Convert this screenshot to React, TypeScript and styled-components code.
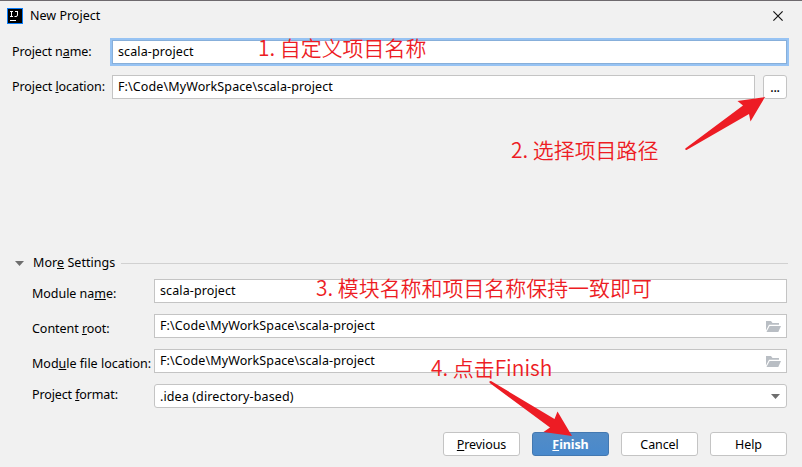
import React from "react";
import styled, { createGlobalStyle } from "styled-components";

const Global = createGlobalStyle`
  * { box-sizing: border-box; }
  body { margin: 0; background: #f1f1f1; }
`;

const Dialog = styled.div`
  position: relative;
  display: flex;
  flex-direction: column;
  width: 802px;
  height: 467px;
  overflow: hidden;
  background: #f1f1f1;
  border-top: 1px solid #6e6a6e;
  color: #000;
  font-family: "Noto Sans", "Open Sans", sans-serif;
  font-size: 12.5px;
  line-height: 18px;
  white-space: nowrap;
`;

const TitleBar = styled.header`
  display: flex;
  align-items: center;
  height: 29px;
  padding: 0 19px 0 7px;
`;

const Title = styled.h1`
  flex: 1;
  margin: 1px 0 0 7px;
  font-size: inherit;
  font-weight: 400;
`;

const ProjectForm = styled.section`
  display: grid;
  grid-template-columns: 100px 1fr;
  grid-auto-rows: 24px;
  row-gap: 11px;
  padding: 10px 15px 0 12px;
`;

const ModuleForm = styled(ProjectForm)`
  grid-template-columns: 122px 1fr;
  padding: 6px 15px 0 32px;
`;

const Label = styled.label<{ $drop?: number; $spacing?: number }>`
  align-self: start;
  margin-top: ${(p) => p.$drop ?? 3}px;
  letter-spacing: ${(p) => p.$spacing ?? 0}px;
`;

const Mnemonic = styled.span`
  text-decoration: underline;
  text-decoration-thickness: 1px;
  text-underline-offset: 1px;
  text-decoration-skip-ink: none;
`;

const Field = styled.div<{ $focused?: boolean; $rounded?: boolean; $lift?: number }>`
  display: flex;
  flex: 1;
  align-items: center;
  justify-content: space-between;
  height: 24px;
  padding: 0 5px;
  background: #fff;
  border: 1px solid ${(p) => (p.$focused ? "#87afda" : "#c4c4c4")};
  border-radius: ${(p) => (p.$rounded ? 3 : 0)}px;
  box-shadow: ${(p) => (p.$focused ? "0 0 0 2px #97c3f3" : "none")};
  letter-spacing: 0.11px;

  > span {
    margin-top: ${(p) => p.$lift ?? 0}px;
  }
`;

const FieldGroup = styled.div`
  display: flex;
  gap: 8px;
`;

const Button = styled.button<{ $primary?: boolean }>`
  width: 77px;
  height: 24px;
  padding: 1px 0 0;
  background: ${(p) => (p.$primary ? "linear-gradient(#528cc7, #4989cc)" : "#fff")};
  border: 1px solid ${(p) => (p.$primary ? "#4378b0" : "#c4c4c4")};
  border-radius: 3px;
  color: ${(p) => (p.$primary ? "#fff" : "#000")};
  font: inherit;
  font-weight: ${(p) => (p.$primary ? 700 : 400)};
  letter-spacing: -0.1px;
`;

const BrowseButton = styled(Button)`
  width: 24px;
  padding-top: 2px;
  font-weight: 500;
  letter-spacing: -0.3px;
`;

const SectionHeader = styled.div`
  display: flex;
  align-items: center;
  height: 20px;
  margin-top: 154px;
  padding: 0 14px 0 15px;
`;

const SectionTitle = styled.span`
  margin: 0 6px 0 9px;
  letter-spacing: 0.05px;
`;

const Rule = styled.div`
  flex: 1;
  height: 1px;
  background: #d1d1d1;
`;

const Footer = styled.footer`
  display: flex;
  justify-content: flex-end;
  gap: 12px;
  margin-top: 24px;
  padding-right: 15px;
`;

const Note = styled.div<{ $x: number; $y: number }>`
  position: absolute;
  left: ${(p) => p.$x}px;
  top: ${(p) => p.$y}px;
  color: #ed1c24;
  font: 350 20.95px/30px "Noto Sans CJK SC", sans-serif;
`;

const Arrows = styled.svg`
  position: absolute;
  left: 0;
  top: -1px;
  pointer-events: none;
`;

const AppIcon = () => (
  <svg width="16" height="16" viewBox="0 0 16 16">
    <rect width="16" height="16" fill="#087cfa" />
    <rect x="1" y="1" width="14" height="14" fill="#000" />
    <path d="M3 3.5h3M4.500 3.500v5M3 8.500h3M8 3.500h3M10.500 3.500v3.500q0 1.500-1.500 1.500H7.500M3 12.500h6" fill="none" stroke="#fff" strokeWidth="1" />
  </svg>
);

const CloseIcon = () => (
  <svg width="10" height="10" viewBox="0 0 10 10">
    <path d="M.4.4l9.200 9.200M9.600.4L.4 9.600" stroke="#111" strokeWidth="1.15" />
  </svg>
);

const Chevron = () => (
  <svg width="9" height="5" viewBox="0 0 9 5">
    <path d="M0 0h9L4.500 5z" fill="#6e6e6e" />
  </svg>
);

const ChevronSlot = styled.div`
  display: flex;
  margin-right: 1px;
`;

const FolderIcon = () => (
  <svg width="15" height="11" viewBox="0 0 15 11">
    <path d="M0 0h5l1.500 2H13v1.700H3L0 9.500z" fill="#b9bec4" />
    <path d="M3.600 5H15l-2.700 6H.5z" fill="#b9bec4" />
  </svg>
);

export default function App() {
  const path = "F:\\Code\\MyWorkSpace\\scala-project";
  return (
    <>
      <Global />
      <Dialog>
        <TitleBar>
          <AppIcon />
          <Title>New Project</Title>
          <CloseIcon />
        </TitleBar>
        <ProjectForm>
          <Label $spacing={-0.12}>Project n<Mnemonic>a</Mnemonic>me:</Label>
          <Field $focused><span>scala-project</span></Field>
          <Label $spacing={-0.08}>Project <Mnemonic>l</Mnemonic>ocation:</Label>
          <FieldGroup>
            <Field><span>{path}</span></Field>
            <BrowseButton>...</BrowseButton>
          </FieldGroup>
        </ProjectForm>
        <SectionHeader>
          <Chevron />
          <SectionTitle>Mor<Mnemonic>e</Mnemonic> Settings</SectionTitle>
          <Rule />
        </SectionHeader>
        <ModuleForm>
          <Label $drop={6} $spacing={-0.04}>Module na<Mnemonic>m</Mnemonic>e:</Label>
          <Field $lift={-1}><span>scala-project</span></Field>
          <Label $drop={6} $spacing={-0.04}>Content <Mnemonic>r</Mnemonic>oot:</Label>
          <Field $lift={-1}><span>{path}</span><FolderIcon /></Field>
          <Label $drop={6}>Mod<Mnemonic>u</Mnemonic>le file location:</Label>
          <Field $lift={-1}><span>{path}</span><FolderIcon /></Field>
          <Label $drop={2} $spacing={-0.12}>Project <Mnemonic>f</Mnemonic>ormat:</Label>
          <Field $rounded $lift={1}>
            <span>.idea (directory-based)</span>
            <ChevronSlot><Chevron /></ChevronSlot>
          </Field>
        </ModuleForm>
        <Footer>
          <Button><Mnemonic>P</Mnemonic>revious</Button>
          <Button $primary><Mnemonic>F</Mnemonic>inish</Button>
          <Button>Cancel</Button>
          <Button>Help</Button>
        </Footer>
        <Note $x={258} $y={31}>1. 自定义项目名称</Note>
        <Note $x={511} $y={133}>2. 选择项目路径</Note>
        <Note $x={316} $y={271}>3. 模块名称和项目名称保持一致即可</Note>
        <Note $x={431} $y={351}>4. 点击Finish</Note>
        <Arrows width="802" height="467" viewBox="0 0 802 467">
          <path d="M765 97L737.500 101L743 105.500L685.300 148.500Q685 150.500 687 149.800L749 114L750.500 121.500Z" fill="#ed1c24" />
          <path d="M572 436L557.500 411.500L554.500 419L491 381Q488.500 381 489.800 383L550 427.500L543.500 432Z" fill="#ed1c24" />
        </Arrows>
      </Dialog>
    </>
  );
}
